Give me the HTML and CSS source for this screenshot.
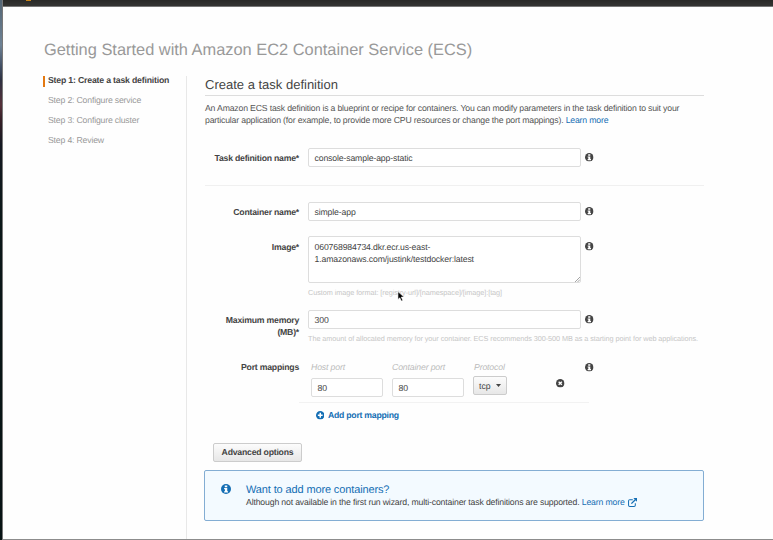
FILE: index.html
```html
<!DOCTYPE html>
<html lang="en">
<head>
<meta charset="utf-8">
<title>Amazon ECS - Getting Started</title>
<link rel="stylesheet" href="styles.css">
</head>
<body>
<svg class="defs" width="0" height="0">
  <symbol id="info" viewBox="0 0 16 16"><circle cx="8" cy="8" r="8" fill="currentColor"/><path d="M6 2.5h4v2.7H6zM5 6.5h5v5h1.3v2H5v-2h1.3v-3H5z" fill="#fff"/></symbol>
  <symbol id="remove" viewBox="0 0 16 16"><circle cx="8" cy="8" r="8" fill="currentColor"/><path d="M5 5l6 6M11 5l-6 6" stroke="#fff" stroke-width="2.6"/></symbol>
  <symbol id="plus" viewBox="0 0 16 16"><circle cx="8" cy="8" r="8" fill="currentColor"/><path d="M8 3.5v9M3.5 8h9" stroke="#fff" stroke-width="2.8"/></symbol>
  <symbol id="external" viewBox="0 0 16 16"><path d="M8.5 3H3.2Q1 3 1 5.2v7.6Q1 15 3.2 15h7.6Q13 15 13 12.800V9.500" fill="none" stroke="currentColor" stroke-width="1.8"/><path d="M6 10l7-7" stroke="currentColor" stroke-width="2.4"/><path d="M9.500 0H16v6.500z" fill="currentColor"/></symbol>
</svg>
<div class="window">
  <header class="topbar"><span class="logo"></span></header>
  <h1>Getting Started with Amazon EC2 Container Service (ECS)</h1>
  <div class="layout">
    <nav class="steps">
      <div class="step active"><span>Step 1: Create a task definition</span></div>
      <div class="step"><span>Step 2: Configure service</span></div>
      <div class="step"><span>Step 3: Configure cluster</span></div>
      <div class="step"><span>Step 4: Review</span></div>
    </nav>
    <main>
      <h2>Create a task definition</h2>
      <p class="intro">An Amazon ECS task definition is a blueprint or recipe for containers. You can modify parameters in the task definition to suit your<br>particular application (for example, to provide more CPU resources or change the port mappings). <a>Learn more</a></p>
      <div class="row name-row">
        <label>Task definition name*</label>
        <div class="input">console-sample-app-static</div>
        <svg class="icon"><use href="#info"/></svg>
      </div>
      <div class="row container-row">
        <label>Container name*</label>
        <div class="input">simple-app</div>
        <svg class="icon"><use href="#info"/></svg>
      </div>
      <div class="row image-row">
        <label>Image*</label>
        <div>
          <div class="input area">060768984734.dkr.ecr.us-east-<br>1.amazonaws.com/justink/testdocker:latest
            <svg class="grip" viewBox="0 0 6 6"><path d="M0 6l6-6M3 6l3-3" stroke="#777" stroke-width=".8"/></svg>
          </div>
          <div class="help">Custom image format: [registry-url]/[namespace]/[image]:[tag]</div>
        </div>
        <svg class="icon"><use href="#info"/></svg>
      </div>
      <div class="row memory-row">
        <label>Maximum memory<br>(MB)*</label>
        <div>
          <div class="input">300</div>
          <div class="help">The amount of allocated memory for your container. ECS recommends 300-500 MB as a starting point for web applications.</div>
        </div>
        <svg class="icon"><use href="#info"/></svg>
      </div>
      <div class="row port-row">
        <label>Port mappings</label>
        <div class="ports">
          <div class="port"><em>Host port</em><div class="input">80</div></div>
          <div class="port"><em>Container port</em><div class="input">80</div></div>
          <div class="port proto"><em>Protocol</em><div class="select">tcp<i class="caret"></i></div></div>
          <svg class="icon remove"><use href="#remove"/></svg>
        </div>
        <svg class="icon"><use href="#info"/></svg>
      </div>
      <div class="add"><svg class="icon"><use href="#plus"/></svg><span>Add port mapping</span></div>
      <div class="advanced">Advanced options</div>
      <section class="notice">
        <svg class="icon"><use href="#info"/></svg>
        <div>
          <h3>Want to add more containers?</h3>
          <p><span>Although not available in the first run wizard, multi-container task definitions are supported. <a>Learn more</a></span><svg class="ext"><use href="#external"/></svg></p>
        </div>
      </section>
    </main>
  </div>
</div>
<svg class="cursor" viewBox="0 0 12 18"><path d="M1 1v13l3-3 2.500 5.500 2.500-1-2.500-5.500H11z" fill="#000" stroke="#fff" stroke-width="1"/></svg>
</body>
</html>
```
FILE: styles.css
```css
* { box-sizing: border-box; }
body {
  margin: 0;
  height: 540px;
  overflow: hidden;
  padding-left: 2px;
  background: linear-gradient(#536574 0, #6e8295 45px, #3f4b60 68px, #2e3142 80px, #553139 105px, #351f27 120px, #141922 145px, #0b1718 220px, #071314 540px);
  font: 8.700px/12.400px "Liberation Sans", Arial, sans-serif;
  letter-spacing: -0.140px;
  text-rendering: geometricPrecision;
  color: #444;
}
.defs { position: absolute; }
.window {
  height: 540px;
  background: #fefefe;
  border-left: 1px solid #777;
  border-bottom: 1px solid #8c8c8c;
}
.topbar {
  height: 7px;
  padding-left: 23px;
  background: linear-gradient(#292927, #333331 5px);
  border-bottom: 1px solid #777;
}
.logo { display: block; width: 5px; height: 1px; background: #c98417; }
h1, h2, h3, p { margin: 0; font-weight: 400; }
h1 {
  height: 69px;
  padding: 33px 0 0 41px;
  font-size: 16.400px;
  letter-spacing: 0;
  line-height: 20px;
  color: #999;
  white-space: nowrap;
}
.layout { display: flex; height: 463px; }
.steps { width: 184px; padding-left: 40px; border-right: 1px solid #e8e8e8; }
.step { height: 20px; padding-left: 5px; line-height: 9px; color: #999; white-space: nowrap; letter-spacing: -0.180px; }
.step span { display: block; }
.active { font-weight: 700; color: #444; }
.active span { margin-left: -5px; padding-left: 3px; border-left: 2px solid #e47911; height: 11px; }
main { width: 499px; margin-left: 18px; }
h2 {
  height: 20px;
  font-size: 13px;
  letter-spacing: 0;
  line-height: 18px;
  border-bottom: 1px solid #ddd;
  white-space: nowrap;
}
.intro { height: 52px; padding-top: 6px; color: #555; white-space: nowrap; letter-spacing: -0.175px; }
a { color: #146eb4; }
.row {
  display: grid;
  grid-template-columns: 94px 273px 9px;
  column-gap: 9px;
  align-items: start;
}
.row > .icon { margin: 5px 0 0 -5px; }
.row.image-row > .icon, .row.port-row > .icon { margin-top: 6px; }
label { padding-top: 4px; text-align: right; font-weight: 700; white-space: nowrap; letter-spacing: -0.220px; }
.input {
  height: 19px;
  padding: 3px 5.500px;
  background: #fff;
  border: 1px solid #ddd;
  border-radius: 2px;
  white-space: nowrap;
}
.icon { display: block; width: 8.500px; height: 8.500px; flex: none; }
.name-row { height: 38px; border-bottom: 1px solid #f0f0f0; }
.container-row { margin-top: 16px; height: 34px; }
.image-row { height: 74px; }
.image-row label { padding-top: 5px; }
.area { position: relative; height: 47px; padding-top: 4px; }
.grip { position: absolute; right: 0; bottom: 0; width: 5px; height: 5px; }
.help { height: 19px; padding-top: 4px; color: #c6c6c6; font-size: 7.300px; letter-spacing: -0.070px; line-height: 11px; white-space: nowrap; }
.memory-row { height: 47px; }
.port-row { height: 46px; }
.port-row .ports { display: flex; gap: 9px; width: 290px; height: 46px; margin-left: -9px; padding-left: 12px; border-bottom: 1px solid #f2f2f2; }
.port { width: 72px; }
.port em { display: block; height: 21px; padding-top: 4px; color: #bbb; white-space: nowrap; }
.proto em { height: 19px; padding-left: 1px; }
.proto { width: 34px; }
.select, .advanced {
  border: 1px solid #ccc;
  border-radius: 2px;
  background: linear-gradient(#fcfcfc, #e7e7e7);
  white-space: nowrap;
}
.select { display: flex; width: 34px; height: 19px; padding: 3px 5px; justify-content: space-between; letter-spacing: 0; }
.caret { margin-top: 4px; width: 5px; height: 3px; background: #444; clip-path: polygon(0 0, 100% 0, 50% 100%); }
.remove { margin: 22px 0 0 40px; }
.add { display: flex; align-items: center; gap: 4px; height: 25px; padding-left: 110.500px; font-weight: 700; letter-spacing: -0.250px; color: #146eb4; white-space: nowrap; }
.advanced { width: 89px; height: 19px; margin: 15px 0 0 8px; text-align: center; font-weight: 700; line-height: 17px; letter-spacing: -0.220px; }
.notice {
  display: flex;
  width: 500px;
  height: 51px;
  margin: 8px 0 0 -1px;
  padding: 13px 0 0 16px;
  background: #f3faff;
  border: 1px solid #83add3;
  border-radius: 2px;
}
.notice .icon { width: 10px; height: 10px; margin: 0 15px 0 0; color: #146eb4; }
.notice h3 { height: 12px; font-size: 11px; letter-spacing: -0.130px; line-height: 12px; color: #146eb4; white-space: nowrap; }
.notice p { display: flex; gap: 3px; white-space: nowrap; letter-spacing: -0.155px; }
.ext { width: 9px; height: 9px; margin-top: 2px; color: #146eb4; }
.cursor { position: absolute; left: 397px; top: 291px; width: 8px; height: 11px; }
```
